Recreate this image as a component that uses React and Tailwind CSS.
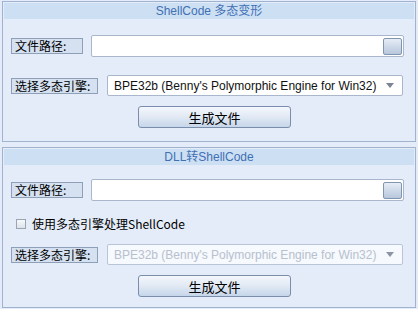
import React from "react";

const cjk = { fontFamily: '"Noto Sans CJK SC", "Liberation Sans", sans-serif' };
const latin = { fontFamily: '"Liberation Sans", "Noto Sans CJK SC", sans-serif' };

const Label = ({ text, width }) => (
  <div
    className="h-[16px] flex items-center pl-[3px] border border-[#8e9fb8] bg-[#d5e1f0] text-[12px] leading-none text-black shrink-0"
    style={{ ...cjk, width }}
  >
    {text}
  </div>
);

const PathInput = () => (
  <div className="ml-[8px] w-[313px] h-[22px] bg-white border border-[#a9b7cc] rounded-[2px] flex items-center justify-end pr-[1px]">
    <div className="w-[19px] h-[17px] rounded-[2px] border border-[#8295b0] bg-gradient-to-b from-[#e6edf6] to-[#b7c7dc]" />
  </div>
);

const Select = ({ disabled }) => (
  <div
    className={`ml-[9px] w-[296px] h-[21px] border rounded-[2px] flex items-center pl-[6px] pr-[8px] ${
      disabled ? "bg-[#f6f9fd] border-[#b9c5d6] text-[#b6c0ce]" : "bg-white border-[#a9b7cc] text-[#111]"
    }`}
  >
    <span className="flex-1 text-[12px] leading-none whitespace-nowrap" style={latin}>
      BPE32b (Benny's Polymorphic Engine for Win32)
    </span>
    <svg width="8" height="5" viewBox="0 0 8 5">
      <path d="M0 0 L8 0 L4 5 Z" fill={disabled ? "#8b95a3" : "#7b8593"} />
    </svg>
  </div>
);

const MakeButton = () => (
  <div
    className="ml-[135px] w-[153px] h-[22px] border border-[#7a8eac] rounded-[3px] bg-gradient-to-b from-[#f4f7fc] via-[#e1e9f4] to-[#c6d6ea] flex items-center justify-center text-[13px] text-black leading-none"
    style={cjk}
  >
    生成文件
  </div>
);

const Title = ({ text }) => (
  <div
    className="mt-[1px] mx-[1px] h-[16px] bg-[#cddff3] flex items-center justify-center text-[12px] text-[#4170b4] leading-none"
    style={latin}
  >
    {text}
  </div>
);

export default function App() {
  return (
    <div className="w-[418px] h-[309px] bg-[#e3ecf8] overflow-hidden pt-[1px] px-[2px]">
      {/* ShellCode 多态变形 */}
      <div className="w-[414px] h-[141px] border border-[#9fb3cf] flex flex-col">
        <Title text="ShellCode 多态变形" />
        <div className="mt-[16px] pl-[8px] flex items-center h-[22px]">
          <Label text="文件路径:" width={72} />
          <PathInput />
        </div>
        <div className="mt-[18px] pl-[8px] flex items-center h-[21px]">
          <Label text="选择多态引擎:" width={87} />
          <Select />
        </div>
        <div className="mt-[10px]">
          <MakeButton />
        </div>
      </div>

      {/* DLL转ShellCode */}
      <div className="mt-[5px] w-[414px] h-[161px] border border-[#9fb3cf] flex flex-col">
        <Title text="DLL转ShellCode" />
        <div className="mt-[14px] pl-[8px] flex items-center h-[22px]">
          <Label text="文件路径:" width={72} />
          <PathInput />
        </div>
        <div className="mt-[15px] pl-[13px] flex items-center h-[16px]">
          <div className="w-[10px] h-[10px] border border-[#9aa5b3] bg-gradient-to-b from-[#f7f8fa] to-[#dde3ea]" />
          <span className="ml-[6px] text-[12px] leading-none text-black" style={cjk}>
            使用多态引擎处理ShellCode
          </span>
        </div>
        <div className="mt-[12px] pl-[8px] flex items-center h-[21px]">
          <Label text="选择多态引擎:" width={87} />
          <Select disabled />
        </div>
        <div className="mt-[10px]">
          <MakeButton />
        </div>
      </div>
    </div>
  );
}
